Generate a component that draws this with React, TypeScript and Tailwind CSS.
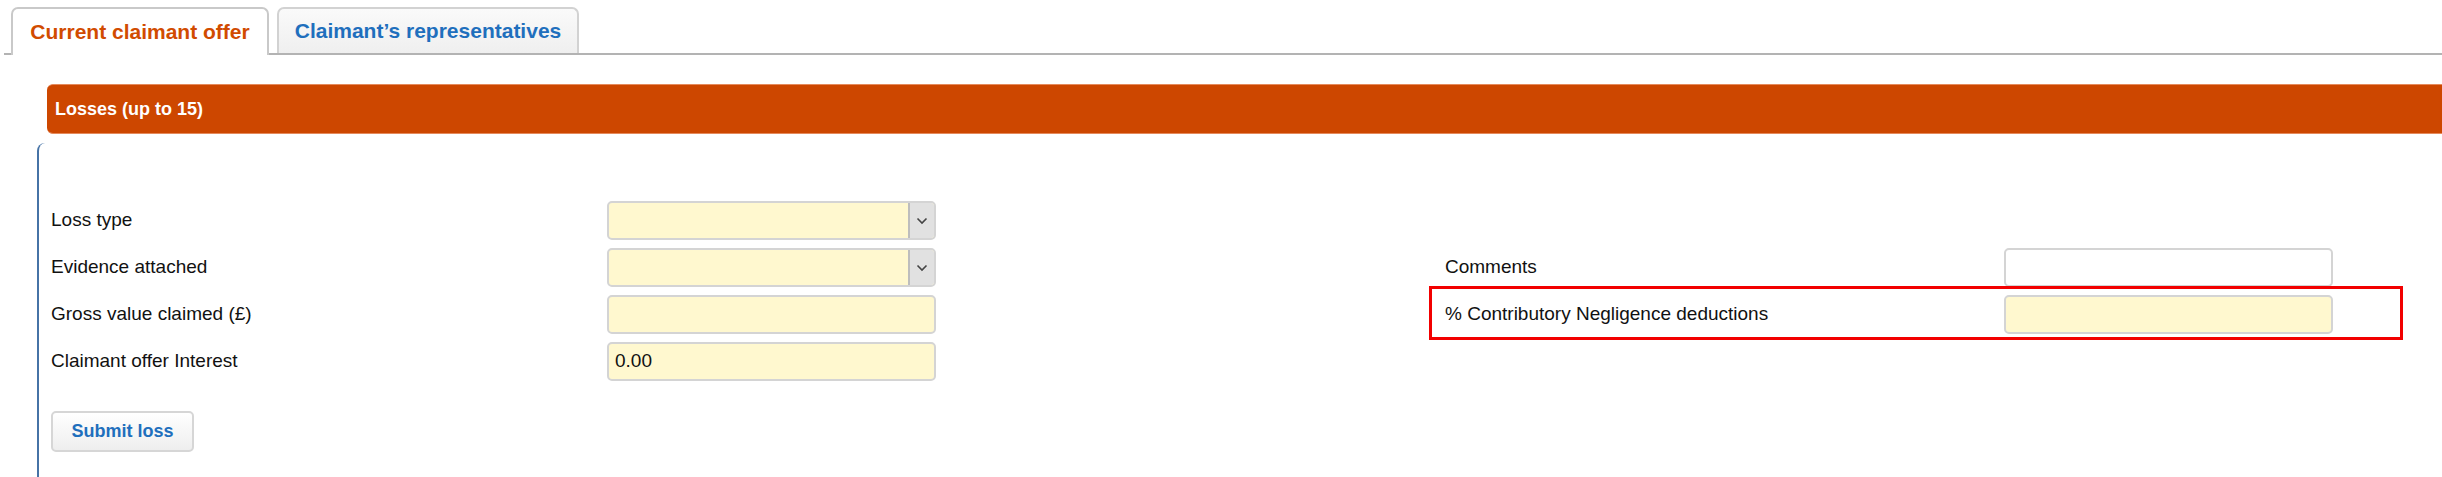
import React from 'react';

const Chevron = () => (
  <svg width="12" height="8" viewBox="0 0 12 8" fill="none">
    <polyline points="1.5,1.5 6,6 10.5,1.5" stroke="#444" strokeWidth="1.6" />
  </svg>
);

const YellowSelect = () => (
  <div className="flex h-[39px] w-[329px] rounded-[5px] border-2 border-[#d4d4d4] bg-[#fff8cf] overflow-hidden">
    <div className="flex-1" />
    <div className="flex w-[26px] items-center justify-center border-l-2 border-[#bdbdbd] bg-[#e1e1e1]">
      <Chevron />
    </div>
  </div>
);

const TextBox = ({ value = '', tone = 'yellow' }: { value?: string; tone?: 'yellow' | 'white' }) => (
  <div
    className={`flex h-[39px] w-[329px] items-center rounded-[5px] border-2 border-[#d4d4d4] px-[6px] text-[19px] text-[#111] ${
      tone === 'yellow' ? 'bg-[#fff8cf]' : 'bg-white'
    }`}
  >
    {value}
  </div>
);

const Row = ({ label, width, children }: { label: string; width: string; children?: React.ReactNode }) => (
  <div className="flex h-[39px] items-center">
    <div className={`${width} text-[19px] text-[#111]`}>{label}</div>
    {children}
  </div>
);

const App = () => {
  return (
    <div className="h-[477px] w-full overflow-hidden bg-white font-['Liberation_Sans',Arial,sans-serif]">
      {/* tabs */}
      <div className="ml-[4px] flex h-[55px] items-end gap-[8px] border-b-2 border-[#b3b3b3] pl-[7px]">
        <div className="-mb-[2px] flex h-[48px] w-[258px] items-center justify-center rounded-t-[7px] border-2 border-b-0 border-[#c9c9c9] bg-white text-[21px] font-bold text-[#d14b00]">
          Current claimant offer
        </div>
        <div className="flex h-[46px] w-[302px] items-center justify-center rounded-t-[7px] border-2 border-b-0 border-[#d2d2d2] bg-gradient-to-b from-[#fafafa] to-[#efefef] text-[21px] font-bold text-[#1f6fbd]">
          Claimant’s representatives
        </div>
      </div>

      {/* section header */}
      <div className="ml-[47px] mt-[29px] flex h-[50px] items-center rounded-l-[6px] border-y border-[#e58a5c] bg-[#cd4700] pl-[8px] text-[18px] font-bold text-white">
        Losses (up to 15)
      </div>

      {/* section body */}
      <div className="ml-[37px] mt-[9px] h-[400px] rounded-tl-[8px] border-l-2 border-l-[#4673a6] pl-[12px] pt-[58px]">
        <div className="flex">
          <div className="flex flex-col gap-[8px]">
            <Row label="Loss type" width="w-[556px]">
              <YellowSelect />
            </Row>
            <Row label="Evidence attached" width="w-[556px]">
              <YellowSelect />
            </Row>
            <Row label="Gross value claimed (£)" width="w-[556px]">
              <TextBox />
            </Row>
            <Row label="Claimant offer Interest" width="w-[556px]">
              <TextBox value="0.00" />
            </Row>
            <div className="mt-[22px]">
              <button className="h-[41px] w-[143px] rounded-[5px] border-2 border-[#d6d6d6] bg-gradient-to-b from-white to-[#eeeeee] text-[18px] font-bold text-[#1f6fbd]">
                Submit loss
              </button>
            </div>
          </div>

          <div className="ml-[509px] flex flex-col gap-[8px]">
            <div className="h-[39px]" />
            <Row label="Comments" width="w-[559px]">
              <TextBox tone="white" />
            </Row>
            <div className="relative">
              <Row label="% Contributory Negligence deductions" width="w-[559px]">
                <TextBox />
              </Row>
              <div className="pointer-events-none absolute -left-[16px] -top-[9px] h-[54px] w-[974px] border-[3px] border-[#f20000]" />
            </div>
          </div>
        </div>
      </div>
    </div>
  );
};

export default App;
